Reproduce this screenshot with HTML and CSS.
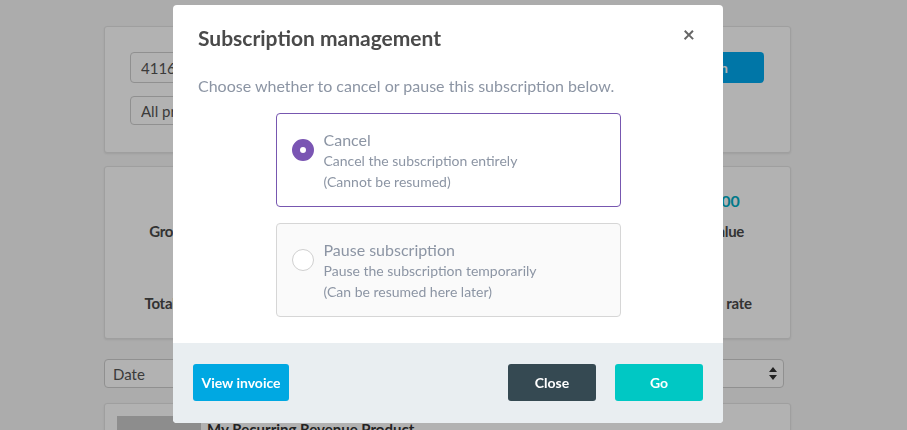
FILE: index.html
```html
<!DOCTYPE html>
<html lang="en">
<head>
    <meta charset="UTF-8">
    <meta name="viewport" content="width=device-width, initial-scale=1.0">
    <title>Subscriptions</title>
    <link rel="stylesheet" href="styles.css">
</head>
<body>
    <!-- page behind the modal -->
    <main class="page">
        <section class="card search-card">
            <div class="search-row">
                <input class="field" type="text" value="4116">
                <button class="search-btn">Search</button>
            </div>
            <select class="field product-select">
                <option>All products</option>
            </select>
        </section>

        <section class="card stats-card">
            <div class="stat">
                <div class="stat-value">3</div>
                <div class="stat-label">Gross revenue</div>
            </div>
            <div class="stat"></div>
            <div class="stat"></div>
            <div class="stat">
                <div class="stat-value">$120.00</div>
                <div class="stat-label">Total value</div>
            </div>
            <div class="stat">
                <div class="stat-value">0</div>
                <div class="stat-label">Total customers</div>
            </div>
            <div class="stat"></div>
            <div class="stat"></div>
            <div class="stat">
                <div class="stat-value">0%</div>
                <div class="stat-label">Renewal rate</div>
            </div>
        </section>

        <div class="sort-select">
            <span>Date</span>
            <svg class="sort-arrows" width="8" height="13" viewBox="0 0 8 13">
                <path d="M4 0 L8 5 L0 5 Z M4 13 L8 8 L0 8 Z" fill="#333"/>
            </svg>
        </div>

        <section class="card product-card">
            <div class="product-thumb"></div>
            <div class="product-name">My Recurring Revenue Product</div>
        </section>
    </main>

    <!-- modal -->
    <div class="backdrop"></div>
    <div class="modal">
        <div class="modal-head">
            <h2>Subscription management</h2>
            <span class="modal-x">&times;</span>
        </div>
        <p class="modal-intro">Choose whether to cancel or pause this subscription below.</p>

        <div class="options">
            <label class="option option-on">
                <span class="radio radio-on"></span>
                <span class="option-text">
                    <span class="option-title">Cancel</span>
                    <span>Cancel the subscription entirely</span>
                    <span>(Cannot be resumed)</span>
                </span>
            </label>
            <label class="option">
                <span class="radio"></span>
                <span class="option-text">
                    <span class="option-title">Pause subscription</span>
                    <span>Pause the subscription temporarily</span>
                    <span>(Can be resumed here later)</span>
                </span>
            </label>
        </div>

        <div class="modal-foot">
            <button class="btn btn-invoice">View invoice</button>
            <span class="spacer"></span>
            <button class="btn btn-close">Close</button>
            <button class="btn btn-go">Go</button>
        </div>
    </div>
</body>
</html>
```

FILE: styles.css
```css
/* base */
body {
    font-family: 'Lato', 'Liberation Sans', sans-serif;
    background-color: #f6f6f6;
    color: #444;
    margin: 0;
    padding: 0;
    height: 430px;
    overflow: hidden;
}

/* page behind the modal */
.page {
    width: 687px;
    margin-left: 104px;
    padding-top: 26px;
    display: flex;
    flex-direction: column;
}

.card {
    background-color: #fff;
    border: 1px solid #e4e4e4;
    border-radius: 3px;
    box-shadow: 0 1px 2px rgba(0, 0, 0, 0.08);
}

.search-card {
    padding: 25px 25px 27px;
    display: flex;
    flex-direction: column;
    gap: 13px;
}

.search-row {
    display: flex;
    gap: 12px;
}

.field {
    font-family: inherit;
    font-size: 15px;
    color: #555;
    border: 1px solid #cfcfcf;
    border-radius: 4px;
    background: #fff;
    padding: 0 10px;
}

.search-row .field {
    flex: 1;
    height: 31px;
    box-sizing: border-box;
}

.search-btn {
    width: 114px;
    height: 31px;
    border: none;
    border-radius: 4px;
    background-color: #00a9ef;
    color: #fff;
    font-family: inherit;
    font-weight: 700;
    font-size: 14px;
    margin-right: 1px;
}

.product-select {
    width: 200px;
    height: 29px;
    appearance: none;
}

.stats-card {
    margin-top: 13px;
    padding: 22px 0 23px;
    display: grid;
    grid-template-columns: 180px 1fr 1fr 160px;
    row-gap: 18px;
}

.stat {
    text-align: center;
    display: flex;
    flex-direction: column;
    gap: 6px;
}

.stat-value {
    line-height: 24px;
    font-size: 16px;
    font-weight: 700;
    color: #00aec6;
}

.stat-label {
    line-height: 24px;
    font-size: 15px;
    font-weight: 700;
    color: #4a4a4a;
    letter-spacing: -0.3px;
}

.sort-select {
    margin-top: 20px;
    width: 680px;
    height: 29px;
    box-sizing: border-box;
    border: 1px solid #cfcfcf;
    border-radius: 4px;
    background: #fff;
    display: flex;
    align-items: center;
    justify-content: space-between;
    padding: 0 6px 0 8px;
    font-size: 15px;
    color: #555;
}

.product-card {
    margin-top: 15px;
    padding: 12px;
    display: flex;
    gap: 6px;
    height: 60px;
}

.product-thumb {
    width: 84px;
    height: 60px;
    background-color: #cbcbcb;
}

.product-name {
    font-weight: 700;
    font-size: 15px;
    color: #333;
    line-height: 14px;
    padding-top: 6px;
}

/* modal */
.backdrop {
    position: fixed;
    inset: 0;
    background-color: rgba(0, 0, 0, 0.3);
}

.modal {
    position: absolute;
    left: 173px;
    top: 5px;
    width: 550px;
    height: 418px;
    background-color: #fff;
    border-radius: 4px;
    overflow: hidden;
    display: flex;
    flex-direction: column;
}

.modal-head {
    padding: 19px 25px 0;
    display: flex;
    justify-content: space-between;
    align-items: flex-start;
}

.modal-head h2 {
    margin: 0;
    font-size: 21px;
    line-height: 28px;
    font-weight: 700;
    color: #4a4a4a;
}

.modal-x {
    font-size: 21px;
    line-height: 20px;
    font-weight: 700;
    color: #666;
    margin-right: 3px;
}

.modal-intro {
    margin: 22px 25px 0;
    font-size: 16px;
    line-height: 24px;
    color: #8c95a4;
}

.options {
    margin-top: 15px;
    display: flex;
    flex-direction: column;
    align-items: center;
    gap: 16px;
}

.option {
    width: 345px;
    box-sizing: border-box;
    border: 1px solid #d6d6d6;
    border-radius: 4px;
    background-color: #fafafa;
    padding: 15px 15px 14px;
    display: flex;
    gap: 10px;
}

.option-on {
    border-color: #7757b0;
    background-color: #fff;
}

.radio {
    width: 22px;
    height: 22px;
    box-sizing: border-box;
    border-radius: 50%;
    border: 1px solid #cfcfcf;
    background-color: #fff;
    margin-top: 10px;
    flex-shrink: 0;
}

.radio-on {
    border: 8px solid #7a55b3;
}

.option-text {
    display: flex;
    flex-direction: column;
    font-size: 14px;
    line-height: 21px;
    color: #8c95a4;
}

.option-text .option-title {
    font-size: 16px;
}

.modal-foot {
    margin-top: auto;
    height: 80px;
    box-sizing: border-box;
    background-color: #e9eef1;
    padding: 21px 20px 22px;
    display: flex;
    gap: 19px;
}

.spacer {
    flex: 1;
}

.btn {
    height: 37px;
    border: none;
    border-radius: 3px;
    color: #fff;
    font-family: inherit;
    font-weight: 700;
    font-size: 14px;
}

.btn-invoice {
    width: 96px;
    background-color: #00a8e2;
}

.btn-close {
    width: 88px;
    background-color: #354952;
}

.btn-go {
    width: 88px;
    background-color: #00c8c4;
}
```
